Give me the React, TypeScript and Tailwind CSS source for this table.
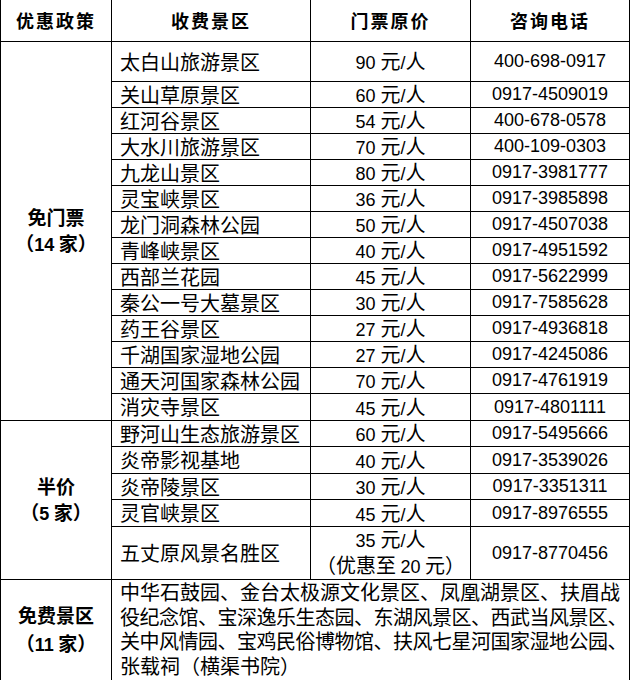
const cjk = "font-['Noto_Sans_CJK_SC',sans-serif]"
const num = "font-['Liberation_Sans','Noto_Sans_CJK_SC',sans-serif] text-[18px]"

const freeRows = [
    { name: '太白山旅游景区', price: '90', tel: '400-698-0917' },
    { name: '关山草原景区', price: '60', tel: '0917-4509019' },
    { name: '红河谷景区', price: '54', tel: '400-678-0578' },
    { name: '大水川旅游景区', price: '70', tel: '400-109-0303' },
    { name: '九龙山景区', price: '80', tel: '0917-3981777' },
    { name: '灵宝峡景区', price: '36', tel: '0917-3985898' },
    { name: '龙门洞森林公园', price: '50', tel: '0917-4507038' },
    { name: '青峰峡景区', price: '40', tel: '0917-4951592' },
    { name: '西部兰花园', price: '45', tel: '0917-5622999' },
    { name: '秦公一号大墓景区', price: '30', tel: '0917-7585628' },
    { name: '药王谷景区', price: '27', tel: '0917-4936818' },
    { name: '千湖国家湿地公园', price: '27', tel: '0917-4245086' },
    { name: '通天河国家森林公园', price: '70', tel: '0917-4761919' },
    { name: '消灾寺景区', price: '45', tel: '0917-4801111' },
]

const halfRows = [
    { name: '野河山生态旅游景区', price: '60', tel: '0917-5495666' },
    { name: '炎帝影视基地', price: '40', tel: '0917-3539026' },
    { name: '炎帝陵景区', price: '30', tel: '0917-3351311' },
    { name: '灵官峡景区', price: '45', tel: '0917-8976555' },
]

const cell = 'border-r border-b border-black flex items-center'

function Price({ n }: { n: string }) {
    return (
        <span className={num}>
            {n} <span className={`${cjk} text-[20px]`}>元</span>/<span className={`${cjk} text-[20px]`}>人</span>
        </span>
    )
}

function Row({ name, price, tel }: { name: string; price: string; tel: string }) {
    return (
        <>
            <div className={`${cell} pl-2 text-[20px]`}>{name}</div>
            <div className={`${cell} justify-center`}>
                <Price n={price} />
            </div>
            <div className={`${cell} justify-center ${num}`}>{tel}</div>
        </>
    )
}

function Label({ title, count }: { title: string; count: string }) {
    return (
        <div className="flex flex-col items-center font-bold text-[19px] leading-[26px]">
            <div>{title}</div>
            <div>
                （<span className="font-['Liberation_Sans',sans-serif] text-[18px] font-bold">{count}</span> 家）
            </div>
        </div>
    )
}

export default function App() {
    return (
        <div className={`w-[631px] h-[680px] overflow-hidden bg-white text-black ${cjk}`}>
            <div className="grid w-[630px] grid-cols-[111px_199px_160px_159px] grid-rows-[42px_40px_repeat(12,26px)_27px_26px_27px_26px_27px_53px_101px] border-l border-black">
                <div className={`${cell} justify-center font-bold text-[18px] tracking-[2px]`}>优惠政策</div>
                <div className={`${cell} justify-center font-bold text-[18px] tracking-[2px]`}>收费景区</div>
                <div className={`${cell} justify-center font-bold text-[18px] tracking-[2px]`}>门票原价</div>
                <div className={`${cell} justify-center font-bold text-[18px] tracking-[2px]`}>咨询电话</div>

                <div className={`${cell} row-span-14 justify-center`}>
                    <Label title="免门票" count="14" />
                </div>
                {freeRows.map((r) => (
                    <Row key={r.name} {...r} />
                ))}

                <div className={`${cell} row-span-5 justify-center`}>
                    <Label title="半价" count="5" />
                </div>
                {halfRows.map((r) => (
                    <Row key={r.name} {...r} />
                ))}
                <div className={`${cell} pl-2 text-[20px]`}>五丈原风景名胜区</div>
                <div className={`${cell} flex-col justify-center leading-[24px]`}>
                    <Price n="35" />
                    <div className="text-[20px]">
                        （优惠至 <span className={num}>20</span> 元）
                    </div>
                </div>
                <div className={`${cell} justify-center ${num}`}>0917-8770456</div>

                <div className={`${cell} justify-center`}>
                    <div className="flex flex-col items-center font-bold text-[19px] leading-[28px]">
                        <div>免费景区</div>
                        <div>
                            （<span className="font-['Liberation_Sans',sans-serif] text-[18px] font-bold">11</span> 家）
                        </div>
                    </div>
                </div>
                <div className="col-span-3 border-r border-black pl-2 text-[20px] leading-[24.7px] whitespace-nowrap">
                    <div>中华石鼓园、金台太极源文化景区、凤凰湖景区、扶眉战</div>
                    <div className="tracking-[-0.5px]">役纪念馆、宝深逸乐生态园、东湖风景区、西武当风景区、</div>
                    <div className="tracking-[-0.5px]">关中风情园、宝鸡民俗博物馆、扶风七星河国家湿地公园、</div>
                    <div>张载祠（横渠书院）</div>
                </div>
            </div>
        </div>
    )
}
